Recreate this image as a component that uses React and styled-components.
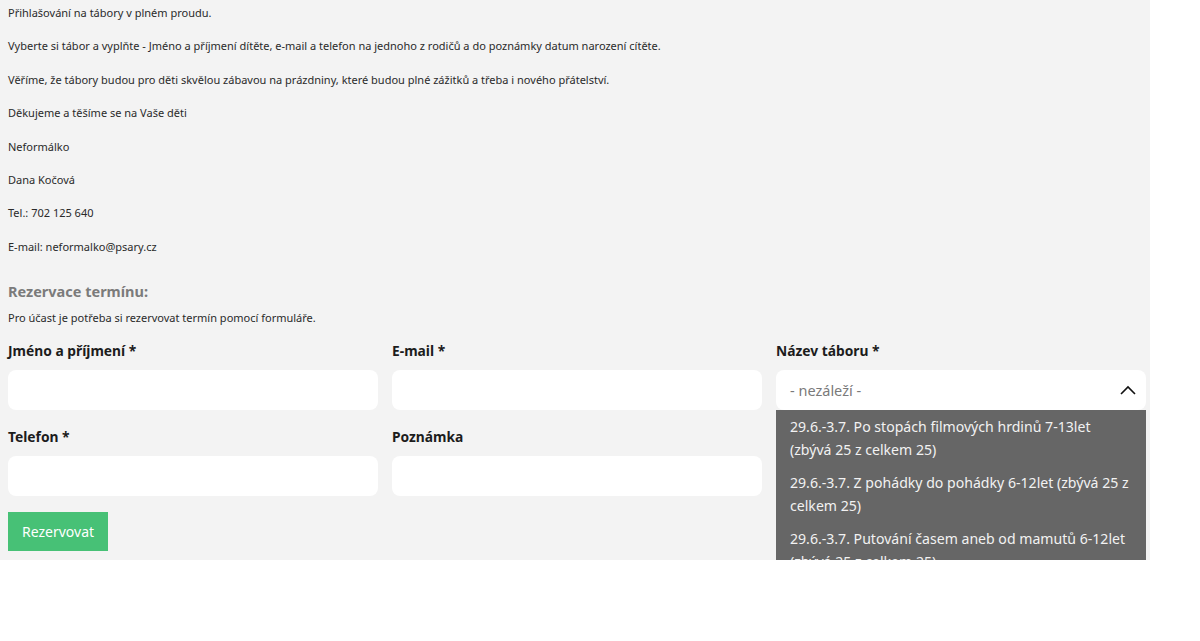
import React from 'react'
import styled, { createGlobalStyle } from 'styled-components'

const GlobalStyle = createGlobalStyle`
  html, body {
    margin: 0;
    padding: 0;
    background: #ffffff;
  }
  body {
    font-family: "Noto Sans", "Open Sans", sans-serif;
    color: #222;
  }
`

const Panel = styled.div`
  width: 1140px;
  padding: 4px 2px 9px 8px;
  background: #f3f3f3;
  overflow: hidden;
`

const Text = styled.p`
  margin: 0 0 16px;
  font-size: 11px;
  line-height: 17.4px;
  color: #2a2a2a;
`

const Heading = styled.h3`
  margin: 26px 0 8px;
  font-size: 14.5px;
  line-height: 20px;
  font-weight: 700;
  color: #7b7b7b;
`

const Intro = styled(Text)`
  margin-bottom: 14px;
`

const Form = styled.form`
  display: grid;
  grid-template-columns: repeat(3, 370px);
  column-gap: 14px;
  row-gap: 17px;
  align-items: start;
`

const Field = styled.div`
  display: flex;
  flex-direction: column;
  gap: 9px;
  position: relative;
  grid-row: ${p => p.$row};
  grid-column: ${p => p.$col};
`

const Label = styled.label`
  font-size: 13.8px;
  line-height: 20px;
  font-weight: 700;
  color: #1c1c1c;
`

const Input = styled.input`
  box-sizing: border-box;
  width: 100%;
  height: 40px;
  border: none;
  border-radius: 8px;
  background: #ffffff;
  padding: 0 14px;
  font: inherit;
`

const SelectBox = styled.div`
  box-sizing: border-box;
  height: 40px;
  border-radius: 8px;
  background: #ffffff;
  padding: 0 8px 0 14px;
  display: flex;
  align-items: center;
  justify-content: space-between;
  position: relative;
  z-index: 2;
`

const Placeholder = styled.span`
  font-size: 14.5px;
  color: #7a7a7a;
`

const Options = styled.ul`
  position: absolute;
  top: 69px;
  left: 0;
  right: 0;
  margin: 0;
  padding: 0;
  list-style: none;
  background: #666666;
  z-index: 1;
`

const Option = styled.li`
  padding: 5px 14px;
  font-size: 14.1px;
  line-height: 23px;
  color: #f2f2f2;
`

const Button = styled.button`
  grid-row: 3;
  grid-column: 1;
  justify-self: start;
  margin-top: -1px;
  height: 39px;
  padding: 0 14px;
  border: none;
  background: #47c176;
  color: #ffffff;
  font-family: inherit;
  font-size: 14px;
`

const Chevron = () => (
  <svg width="20" height="20" viewBox="0 0 20 20" fill="none">
    <path d="M3 14 L10 7 L17 14" stroke="#111" strokeWidth="1.6" />
  </svg>
)

const paragraphs = [
  'Přihlašování na tábory v plném proudu.',
  'Vyberte si tábor a vyplňte - Jméno a příjmení dítěte, e-mail a telefon na jednoho z rodičů a do poznámky datum narození cítěte.',
  'Věříme, že tábory budou pro děti skvělou zábavou na prázdniny, které budou plné zážitků a třeba i nového přátelství.',
  'Děkujeme a těšíme se na Vaše děti',
  'Neformálko',
  'Dana Kočová',
  'Tel.: 702 125 640',
  'E-mail: neformalko@psary.cz',
]

const camps = [
  '29.6.-3.7. Po stopách filmových hrdinů 7-13let (zbývá 25 z celkem 25)',
  '29.6.-3.7. Z pohádky do pohádky 6-12let (zbývá 25 z celkem 25)',
  '29.6.-3.7. Putování časem aneb od mamutů 6-12let (zbývá 25 z celkem 25)',
]

export default function App() {
  return (
    <>
      <GlobalStyle />
      <Panel>
        {paragraphs.map(t => (
          <Text key={t}>{t}</Text>
        ))}
        <Heading>Rezervace termínu:</Heading>
        <Intro>Pro účast je potřeba si rezervovat termín pomocí formuláře.</Intro>
        <Form onSubmit={e => e.preventDefault()}>
          <Field $row={1} $col={1}>
            <Label>Jméno a příjmení *</Label>
            <Input type="text" />
          </Field>
          <Field $row={1} $col={2}>
            <Label>E-mail *</Label>
            <Input type="email" />
          </Field>
          <Field $row={1} $col={3}>
            <Label>Název táboru *</Label>
            <SelectBox>
              <Placeholder>- nezáleží -</Placeholder>
              <Chevron />
            </SelectBox>
            <Options>
              {camps.map(c => (
                <Option key={c}>{c}</Option>
              ))}
            </Options>
          </Field>
          <Field $row={2} $col={1}>
            <Label>Telefon *</Label>
            <Input type="tel" />
          </Field>
          <Field $row={2} $col={2}>
            <Label>Poznámka</Label>
            <Input type="text" />
          </Field>
          <Button type="submit">Rezervovat</Button>
        </Form>
      </Panel>
    </>
  )
}
